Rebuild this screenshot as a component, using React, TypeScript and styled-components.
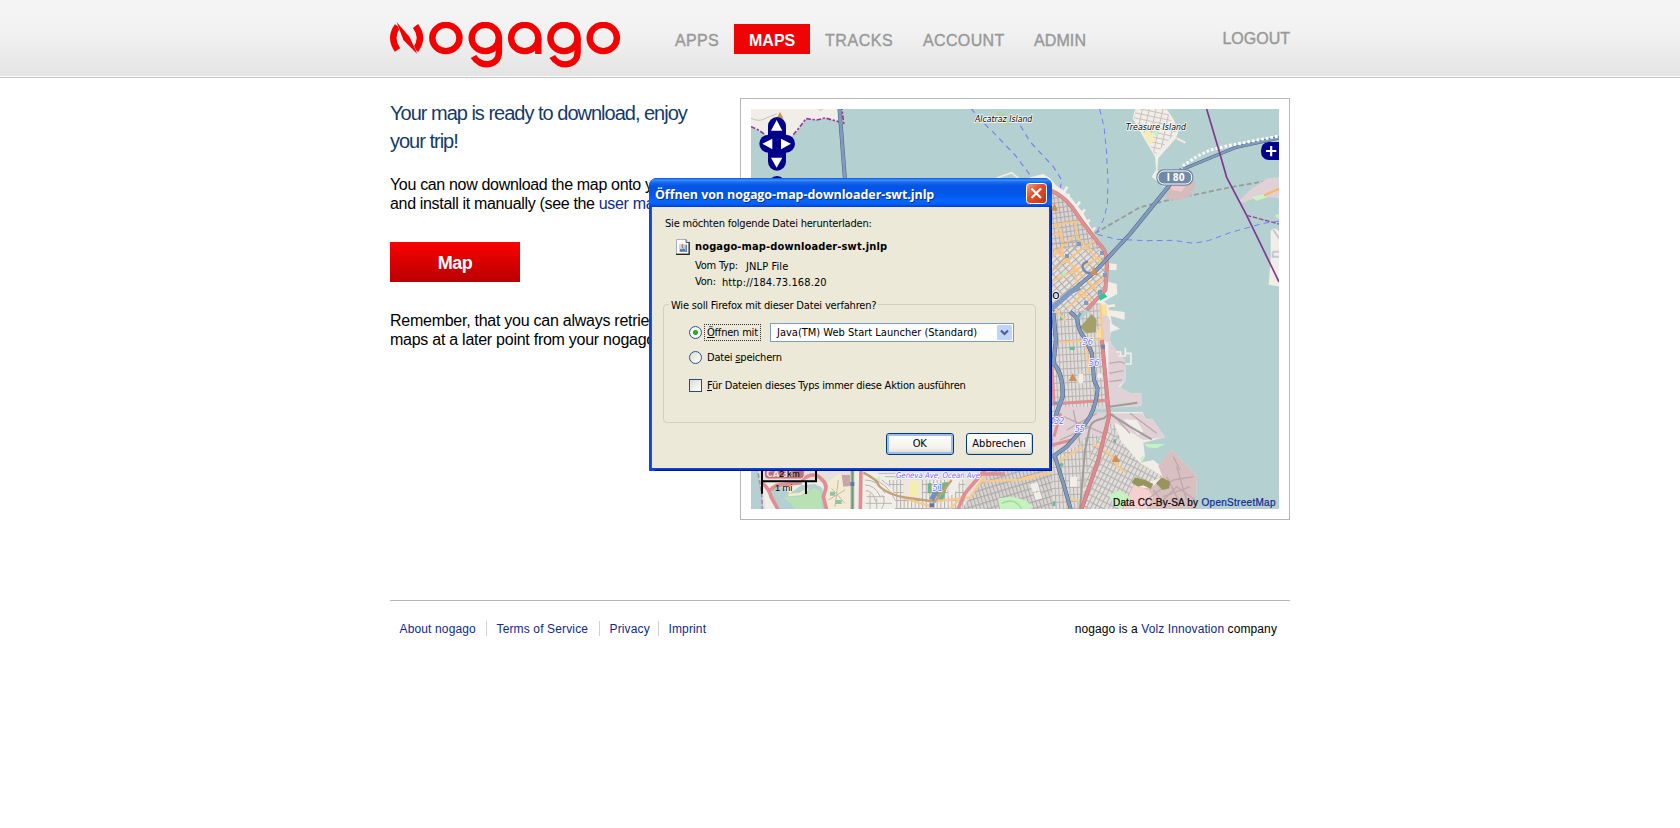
import React from "react";
import styled, { createGlobalStyle } from "styled-components";

const GlobalStyle = createGlobalStyle`
  body {
    margin: 0;
    background: #fff;
    color: #000;
    font-family: "Liberation Sans", Arial, sans-serif;
  }
  * { box-sizing: border-box; }
  h1, p { margin: 0; font-weight: normal; }
  a { color: #0c2a92; text-decoration: none; }
`;

/* ---------- page ---------- */

const Header = styled.header`
  height: 78px;
  background: linear-gradient(#f4f4f4, #f2f2f2 40%, #e4e4e4) 0 0 / 100% 76px no-repeat;
  border-bottom: 1px solid #c4c4c4;
`;

const Container = styled.div`
  width: 900px;
  margin: 0 auto;
`;

const HeaderRow = styled(Container)`
  display: flex;
  align-items: flex-start;
  padding-top: 22px;
`;

const LogoSvg = styled.svg`
  display: block;
  width: 231px;
  height: 46px;
  margin-right: 39px;
`;

const Nav = styled.nav`
  display: flex;
  margin-top: 2px;
`;

const NavItem = styled.a<{ $width: number; $spacing: number; $active?: boolean }>`
  width: ${(p) => p.$width}px;
  height: 30px;
  padding-left: 15px;
  font-size: 16px;
  line-height: 33px;
  white-space: nowrap;
  letter-spacing: ${(p) => p.$spacing}px;
  color: ${(p) => (p.$active ? "#fff" : "#999")};
  font-weight: ${(p) => (p.$active ? "bold" : "normal")};
  background: ${(p) => (p.$active ? "#ee0404" : "transparent")};
  -webkit-text-stroke: ${(p) => (p.$active ? "0" : "0.4px #999")};
`;

const Logout = styled.a`
  margin-left: auto;
  font-size: 16px;
  line-height: 33px;
  color: #999;
  -webkit-text-stroke: 0.4px #999;
`;

const Main = styled(Container)`
  display: flex;
  justify-content: space-between;
  align-items: flex-start;
  padding-top: 20px;
`;

const Intro = styled.section`
  width: 340px;
  padding-top: 1px;
  white-space: nowrap;
`;

const Title = styled.h1`
  font-size: 20px;
  line-height: 28px;
  letter-spacing: -1px;
  color: #143a6b;
`;

const Paragraph = styled.p<{ $top: number; $spacing: number }>`
  margin-top: ${(p) => p.$top}px;
  font-size: 16px;
  line-height: 19px;
  letter-spacing: ${(p) => p.$spacing}px;
`;

const MapButton = styled.button`
  display: block;
  width: 130px;
  height: 40px;
  margin-top: 29px;
  padding: 2px 0 0;
  border: 0;
  background: linear-gradient(#fb0000, #b80000);
  color: #fff;
  font: bold 18px/38px "Liberation Sans", Arial, sans-serif;
  letter-spacing: -0.5px;
`;

const MapFrame = styled.section`
  width: 550px;
  height: 422px;
  padding: 10px;
  border: 1px solid #b6b6b6;
`;

const MapSvg = styled.svg`
  display: block;
  width: 528px;
  height: 400px;
`;

const Footer = styled(Container).attrs({ as: "footer" })`
  display: flex;
  justify-content: space-between;
  margin-top: 80px;
  padding: 20px 13px 0 0;
  border-top: 1px solid #b6b6b6;
  font-size: 12px;
  line-height: 17px;
`;

const FooterLinks = styled.div`
  display: flex;
  height: 15px;
`;

const FooterLink = styled.a<{ $width: number }>`
  width: ${(p) => p.$width}px;
  padding-left: 9.5px;
  letter-spacing: 0.14px;
  & + & { border-left: 1px solid #d0d0d0; }
`;

const Company = styled.div`
  letter-spacing: 0.1px;
`;

/* ---------- download dialog ---------- */

const Dialog = styled.div`
  position: absolute;
  left: 649px;
  top: 178px;
  width: 403px;
  height: 293px;
  display: flex;
  flex-direction: column;
  border-radius: 8px 8px 0 0;
  background: #0a48dd;
  color: #000;
  font: 11px/14px "DejaVu Sans Condensed", "Noto Sans", sans-serif;
  letter-spacing: -0.2px;
  white-space: nowrap;
`;

const TitleBar = styled.div`
  display: flex;
  justify-content: space-between;
  align-items: center;
  height: 29px;
  padding: 1px 5px 0 6px;
  border-radius: 8px 8px 0 0;
  background: linear-gradient(#0b4fd6 0, #3c94ff 2px, #1a6cf2 4px, #0554e2 8px, #0257ea 17px, #0566ff 23px, #0460f5 26px, #003dcb 29px);
`;

const TitleText = styled.span`
  padding-top: 3px;
  color: #fff;
  font: bold 12.5px/20px "Open Sans", "Noto Sans", sans-serif;
  letter-spacing: -0.08px;
  text-shadow: 1px 1px 0 #0a2f8c;
`;

const CloseButton = styled.svg`
  display: block;
  width: 21px;
  height: 21px;
`;

const Body = styled.div`
  flex: 1;
  margin: 0 3px 3px;
  padding: 10px 13px 0 11px;
  background: #ece9d8;
  box-shadow: 1px 1px 0 #0a48dd, 2px 2px 0 #0634cc, 3px 3px 0 #00138c, -1px 0 0 #0a5cf5;
`;

const Question = styled.div`
  padding-left: 2px;
`;

const FileRow = styled.div`
  display: flex;
  gap: 5px;
  margin: 8px 0 0 13px;
  height: 16px;
`;

const FileName = styled.span`
  padding-top: 1px;
  font-weight: bold;
  letter-spacing: 0.14px;
`;

const Detail = styled.div<{ $label: number; $top: number }>`
  display: grid;
  grid-template-columns: ${(p) => p.$label}px auto;
  height: 14px;
  margin: ${(p) => p.$top}px 0 0 32px;
  span + span {
    padding-top: 1px;
    letter-spacing: 0.1px;
  }
`;

const Group = styled.div`
  height: 119px;
  margin-top: 15px;
  border: 1px solid #d0d0bf;
  border-radius: 4px;
`;

const Legend = styled.div`
  display: table;
  margin: -6px 0 10px 5px;
  padding: 0 2px;
  background: #ece9d8;
  letter-spacing: -0.17px;
`;

const Option = styled.label<{ $height: number; $top?: number }>`
  display: flex;
  align-items: center;
  height: ${(p) => p.$height}px;
  margin: ${(p) => p.$top ?? 0}px 0 0 25px;
`;

const Radio = styled.span<{ $on?: boolean }>`
  width: 13px;
  height: 13px;
  margin-right: 2px;
  border: 1px solid #2a5684;
  border-radius: 50%;
  background: ${(p) =>
    p.$on
      ? "radial-gradient(circle, #2fb52f 0, #23a023 2px, #f5f5f0 3px)"
      : "linear-gradient(135deg, #dcdcd4, #fff)"};
`;

const Checkbox = styled.span`
  width: 13px;
  height: 13px;
  margin-right: 2px;
  border: 1px solid #1c5180;
  background: linear-gradient(135deg, #dcdcd4, #fff);
`;

const OptionText = styled.span<{ $focused?: boolean }>`
  padding: 1px 2px 0;
  border: 1px dotted ${(p) => (p.$focused ? "#333" : "transparent")};
  u { text-underline-offset: 1px; }
`;

const Select = styled.span`
  display: flex;
  justify-content: space-between;
  align-items: center;
  width: 244px;
  height: 19px;
  margin-left: auto;
  margin-right: 21px;
  padding: 0 1px 0 6px;
  border: 1px solid #7f9db9;
  background: #fff;
  letter-spacing: 0;
`;

const SelectLabel = styled.span`
  padding-top: 1px;
`;

const SelectArrow = styled.svg`
  display: block;
  width: 15px;
  height: 15px;
`;

const Actions = styled.div`
  display: flex;
  justify-content: flex-end;
  gap: 12px;
  margin: 10px 3px 0 0;
`;

const DialogButton = styled.button<{ $primary?: boolean }>`
  width: ${(p) => (p.$primary ? 68 : 67)}px;
  height: 22px;
  padding: 0 1px 0 0;
  border: 1px solid #003c74;
  border-radius: 3px;
  background: linear-gradient(#fff, #f3f2ec 70%, #dcd8cc);
  box-shadow: ${(p) => (p.$primary ? "inset 0 0 0 2px #9dbdf0" : "inset -1px -1px 0 #d8d4c6")};
  color: #000;
  font: inherit;
  letter-spacing: ${(p) => (p.$primary ? -0.5 : 0)}px;
`;

/* ---------- drawings ---------- */

const Logo = () => (
  <LogoSvg viewBox="0 0 231 46" fill="none" stroke="#f40000" strokeWidth="6.4">
    <path d="M7.500 4 Q-1 16 7.500 28" />
    <path d="M25.500 4 Q34.500 16 25.500 28" />
    <path d="M6.700 0.300 L19.500 15 L27.300 32 L13.500 18 Z" fill="#f40000" stroke="#ececec" strokeWidth=".8" />
    <path d="M6.700 0.300 L19.500 15 L27.300 32 L13.500 18 Z" fill="#f40000" stroke="none" />
    <ellipse cx="55.900" cy="16" rx="13.600" ry="13.100" />
    <ellipse cx="95.300" cy="16" rx="13.600" ry="13.100" />
    <path d="M108.900 16 V30 C108.900 45 90 46 83.500 34.500" />
    <ellipse cx="134.700" cy="16" rx="13.600" ry="13.100" />
    <path d="M148.300 16 V32" />
    <ellipse cx="174" cy="16" rx="13.600" ry="13.100" />
    <path d="M187.600 16 V30 C187.600 45 168.800 46 162.300 34.500" />
    <ellipse cx="213.300" cy="16" rx="13.600" ry="13.100" />
  </LogoSvg>
);

const CloseIcon = () => (
  <CloseButton viewBox="0 0 21 21">
    <defs>
      <linearGradient id="close" x1="0" y1="0" x2="1" y2="1">
        <stop offset="0" stopColor="#f0a48c" />
        <stop offset=".4" stopColor="#e5532c" />
        <stop offset="1" stopColor="#c4310c" />
      </linearGradient>
    </defs>
    <rect x=".5" y=".5" width="20" height="20" rx="3" fill="url(#close)" stroke="#fff" />
    <path d="M5.500 5.500 L15 15 M15 5.500 L5.500 15" stroke="#fff" strokeWidth="2.200" />
  </CloseButton>
);

const FileIcon = () => (
  <svg width="14" height="16" viewBox="0 0 14 16">
    <path d="M.5 .5 H10 L13 3.500 V15 H.5 Z" fill="#fdfdfd" stroke="#a8b0bc" />
    <path d="M13.200 3 V15.400 H0" fill="none" stroke="#222" strokeWidth="1.200" />
    <path d="M10 .5 V3.500 H13" fill="#ddd" stroke="#333" strokeWidth=".8" />
    <rect x="3" y="5" width="8" height="8" fill="#c8d8ec" />
    <path d="M4 10 H9 V12 H4 Z M9.500 6 H11 V13 H4 V12.200 H9.500" fill="#5580b4" />
    <path d="M7 5.500 Q5 7.500 7.500 9.500" fill="none" stroke="#d8683c" strokeWidth="1.200" />
  </svg>
);

const halo = {
  stroke: "#fff",
  strokeWidth: 5,
  strokeLinejoin: "round" as const,
  paintOrder: "stroke",
  lengthAdjust: "spacingAndGlyphs",
};

const water = "#b5d0d0";
const land = "#f1eee8";
const motorway = "#809bc0";

type RoadProps = { d: string; color: string; casing?: string; width: number };
const Road = ({ d, color, casing, width }: RoadProps) => (
  <g fill="none" strokeLinejoin="round">
    {casing && <path d={d} stroke={casing} strokeWidth={width + 3} />}
    <path d={d} stroke={color} strokeWidth={width} />
  </g>
);

type PatternProps = { id: string; w: number; h: number; angle: number; line?: string; bg?: string };
const StreetPattern = ({ id, w, h, angle, line = "#b5b2b1", bg = "#e2dedb" }: PatternProps) => (
  <pattern id={id} width={w} height={h} patternUnits="userSpaceOnUse" patternTransform={`rotate(${angle})`}>
    <rect width={w} height={h} fill={bg} />
    <path d={`M0 1.500 H${w} M1.500 0 V${h}`} stroke={line} strokeWidth="3.500" />
  </pattern>
);

const NorthBay = () => (
  <g transform="translate(735 90) scale(.33333)">
    <path d="M40 50 H318 L325 98 L300 92 L270 84 L245 90 L215 85 L200 108 L180 132 L150 150 L105 142 L85 130 L48 110 Z" fill={land} />
    <path d="M48 85 Q70 95 85 88 T110 78 L125 72 M248 55 L256 62 L265 56" fill="none" stroke="#c6c0c0" strokeWidth="3" />
    <path d="M48 110 L70 120 L88 132 M175 134 L192 114 L213 86 L245 90 L270 84 L300 92 L326 99 L320 50" fill="none" stroke="#953a96" strokeWidth="5" strokeDasharray="14 5 7 5" />
    <path d="M135 66 L146 86 H124 Z" fill="#d08f55" />
    <Road d="M313 50 L330 270" color={motorway} casing="#506077" width={9} />
    <path d="M708 55 Q735 90 770 122 L840 195 L892 264" fill="none" stroke="#7a7aff" strokeWidth="3.500" strokeDasharray="17 14" />
    <path d="M840 80 L885 155 L955 230 L980 270 L975 300" fill="none" stroke="#7a7aff" strokeWidth="3.500" strokeDasharray="17 14" />
    <path d="M782 66 Q800 60 822 82 L832 102 L815 108 L788 84 Z" fill="#b8cfae" />
    <path d="M785 264 L830 248 L850 264" fill="none" stroke={land} strokeWidth="5" />
    <text x="720" y="97" fontSize="28" fontStyle="italic" textLength="172" {...halo}>Alcatraz Island</text>
  </g>
);

const Downtown = () => (
  <g transform="translate(1030 90) scale(.33333)">
    <path d="M0 262 L40 252 L60 265 L80 288 L100 300 L125 325 L160 370 L190 425 L212 455 L236 500 L236 520 L260 522 V540 H236 L234 575 L260 582 L262 612 L238 625 L215 640 H-20 Z" fill={land} />
    <path d="M60 296 L110 325 L160 390 L205 455 L236 505 L230 600 L165 660 H-20 V296 Z" fill="url(#north)" />
    <path d="M66 490 L125 470 L215 480 L236 505 L230 600 L165 660 H66 Z" fill="url(#soma)" />
    <g stroke={land} strokeWidth="8">
      <path d="M95 318 L112 290 M105 335 L118 312 M135 355 L150 335 M150 375 L165 358 M162 400 L180 390 M180 428 L196 412 M232 530 H258 M232 598 L258 596 M232 650 L255 646" />
    </g>
    <g stroke="#f6c583" strokeWidth="6" fill="none">
      <path d="M66 405 L160 392 M66 435 L95 428 L100 470 M66 500 L130 440 M75 400 L95 430 L98 500 L200 600 M66 540 L190 455 M66 575 L215 500 M90 490 L160 560 M135 400 L140 440 L225 530 M110 655 L225 560 M66 470 L130 530 L150 625 M140 590 L190 640" />
    </g>
    <path d="M66 462 L150 455 L66 545" fill="none" stroke="#aaa" strokeWidth="3" />
    <Road d="M60 300 Q100 318 125 350 L160 400 L215 470 Q232 490 231 530 L226 600 L170 660" color="#dd9295" casing="#c97a7e" width={9} />
    <path d="M195 430 L330 352 L400 334 L600 292 L690 276 L747 273" fill="none" stroke="#9b9b9b" strokeWidth="5.500" strokeDasharray="15 8" />
    <g fill={motorway}>
      <path d="M141 456 h12 v12 h-12z M105 492 h12 v12 h-12z M210 483 h12 v12 h-12z M219 549 h12 v12 h-12z M204 600 h12 v12 h-12z M162 633 h12 v12 h-12z" />
    </g>
    <path d="M205 618 L222 608 L232 620 L210 632 Z" fill="#30c898" />
    <path d="M100 543 l8 6 l-6 10 l-8 -8z" fill="#b5f0c0" />
    <path d="M73 340 L84 362 H62 Z" fill="#d08f55" />

    <path d="M315 57 H410 L432 90 L445 125 L438 145 L385 205 L382 240 L405 262 L440 275 L400 290 L365 260 L378 240 L375 200 L345 150 L308 85 Z" fill={land} />
    <path d="M318 57 H408 L440 125 L375 195 L348 140 L312 85 Z" fill="url(#treasure)" />
    <path d="M340 130 l18 -10 l18 30 l-18 14z" fill="#f3edb8" />
    <path d="M372 120 l14 2 l-4 16 l-12 -4z" fill="#c4f3c0" />
    <path d="M440 145 L466 158" stroke={land} strokeWidth="6" />
    <path d="M405 290 L490 268 Q505 280 480 320 L440 332 L405 325 L415 300 Z" fill="#d5bcbc" />
    <path d="M420 285 L465 290 L455 305 L425 300 Z" fill="#f0c8c8" />

    <path d="M628 332 L660 300 L712 265 L750 262 V325 L690 318 L640 338 Z" fill="#dfd1d6" />
    <path d="M664 322 L700 312 L712 322 L680 332 Z M735 376 L750 372 V386 L740 384 Z" fill="#cdf0c4" />
    <path d="M702 316 L725 306 L750 296" fill="none" stroke="#f6b96c" strokeWidth="7" />
    <path d="M722 422 L735 415 L750 425 V590 L716 584 L722 510 Z" fill={land} />
    <path d="M730 420 L750 448 M728 485 V500 H750 M728 485 H750" fill="none" stroke="#c5c5d5" strokeWidth="6" />

    <g fill="none" stroke="#7a7aff" strokeWidth="3" strokeDasharray="17 13">
      <path d="M209 57 L222 110 L229 180 L234 270 L232 345 L220 390 L197 432 L260 448 L350 452 L430 451 L490 460 L535 452 L600 428 L700 400 L747 394" />
    </g>
    <Road d="M460 237 L560 196 L620 171 L747 144" color={motorway} casing="#506077" width={7} />
    <path d="M458 228 L500 200 L540 180 L600 166 L747 138" fill="none" stroke="#fff" strokeWidth="9" strokeDasharray="8 6" />
    <Road d="M455 238 L415 290 L300 432 L195 545 L130 600 L66 655" color={motorway} casing="#506077" width={9} />
    <path d="M195 545 Q165 558 157 530 Q158 518 174 514" fill="none" stroke="#6f8bb5" strokeWidth="7" />
    <path d="M66 655 L125 603 L150 592" fill="none" stroke={motorway} strokeWidth="16" />
    <path d="M192 530 L204 555 H180 Z" fill="#d08f55" />
    <path d="M530 57 L568 185 L590 262 L650 376 L747 576" fill="none" stroke="#7d3a8c" strokeWidth="5" />
    <path d="M650 376 L747 402" fill="none" stroke="#8c4a98" strokeWidth="4" strokeDasharray="14 5" />

    <rect x="379" y="238" width="111" height="49" rx="22" fill="#7189a5" />
    <rect x="384" y="243" width="101" height="39" rx="18" fill="none" stroke="#fff" strokeWidth="3" />
    <text x="410" y="274" fontSize="29" fontWeight="bold" fill="#fff" textLength="54" lengthAdjust="spacingAndGlyphs">I 80</text>
    <text x="287" y="119" fontSize="28" fontStyle="italic" textLength="181" {...halo}>Treasure Island</text>
    <text x="66" y="628" fontSize="38" {...halo}>o</text>
  </g>
);

const SouthBay = () => (
  <g transform="translate(1030 300) scale(.33333)">
    <path d="M-20 0 H215 L235 15 L236 30 L284 36 V60 L242 48 L246 72 L270 86 L242 96 L240 120 L250 150 L285 180 L288 240 L270 262 L300 280 H334 V318 L250 322 L190 326 L195 336 H338 L346 356 L368 358 L405 412 L340 428 L345 470 L330 488 L370 480 L388 495 L424 449 L501 528 L496 640 H-20 Z" fill={land} />
    <path d="M66 0 H210 L236 330 L320 540 L300 627 H-20 V510 H66 Z" fill="url(#mission)" />
    <path d="M235 120 L285 180 L288 240 L265 258 L300 280 H334 V318 L235 324 Z M215 20 L240 60 L240 130 L216 120 Z" fill="#dfd1d6" />
    <path d="M90 320 H235 L230 420 L180 400 L140 440 L80 460 L66 400 Z M236 340 H338 L346 358 L368 358 L405 412 L340 420 L260 370 L236 372 Z" fill="#dfd1d6" />
    <path d="M280 358 L320 360 L340 395 L325 405 Z" fill={land} />
    <path d="M190 428 L240 385 L330 490 L400 530 L320 560 L290 627 H150 Z" fill="url(#bayview)" />
    <path d="M424 449 L501 528 L496 640 H270 L310 560 L360 565 L400 535 L385 497 Z" fill="#d8bfc0" />
    <path d="M310 556 L355 570 L370 590 L350 627 H280 Z" fill="#f7cfcf" />
    <g fill="none" stroke="#c0a8ac" strokeWidth="4">
      <path d="M350 600 L430 540 L490 530 M380 620 L440 560 L495 600 M410 530 L450 610 M440 500 L470 600 M400 590 L480 560 M370 570 L400 610 M430 470 L450 510" />
      <path d="M238 190 L270 185 L285 190 M238 220 L280 212 M238 245 L275 240 M100 350 L220 400 M110 390 L200 340 M90 420 L180 380 M130 330 L150 430 M245 340 L300 400 M300 340 L380 400" />
    </g>
    <path d="M150 82 L185 42 L200 60 L198 95 L170 100 Z" fill="#a3a169" />
    <path d="M140 62 L185 22" stroke={water} strokeWidth="10" />
    <path d="M215 15 L230 12 L232 45 L215 48 Z M200 90 L216 90 V115 L200 112 Z" fill="#f8dfa0" />
    <path d="M305 548 L315 532 L345 540 L370 552 L362 567 L340 556 L325 560 Z M378 550 L395 532 L420 545 L418 565 L398 570 Z" fill="#97955c" />
    <path d="M328 415 L345 432 L405 432 L380 445 L352 442 Z M330 475 L342 465 L338 490 Z M235 585 L270 570 L300 592 L275 627 L255 620 Z" fill="#c4f3c0" />
    <path d="M190 332 H232" stroke={water} strokeWidth="10" />
    <path d="M258 156 H272 V166 M265 168 H286 V143 M288 160 H303 V192 H287" fill="none" stroke={land} strokeWidth="5" />
    <path d="M235 20 H250" stroke="#b89a9a" strokeWidth="6" />
    <path d="M90 40 h8 v20 h-8z M120 140 h14 v10 h-14z M250 418 h8 v10 h-8z M66 604 h10 v14 h-10z M88 490 h12 v9 h-12z" fill="#6fb89a" />
    <path d="M145 222 h14 v28 h-14z M202 220 h14 v14 h-14z M120 530 h22 v30 h-22z M10 548 h20 v20 h-20z M10 580 h25 v18 h-25z" fill={land} />
    <g fill="none" stroke="#f8c98c" strokeWidth="7">
      <path d="M88 128 L215 118 M170 128 L176 222 M188 430 L240 462 L262 498 L288 518 M157 443 L110 468 L78 490 L105 580 L118 627 M105 596 L160 604 M210 0 L218 120 M75 38 L115 5 M-20 540 L66 503 M78 30 L110 65" />
    </g>
    <path d="M237 340 Q270 360 300 380 L365 418 M237 340 L222 355 Q185 362 180 380 L165 450 L150 627 M237 320 L322 308" fill="none" stroke="#a09c9c" strokeWidth="6" />
    <Road d="M216 120 L228 250 L237 350 L205 480 L155 627" color="#dd8a8e" casing="#c47478" width={9} />
    <path d="M66 312 L235 300 M66 195 L72 310 M66 435 L125 420 M72 410 L92 340" fill="none" stroke="#e08f93" strokeWidth="9" />
    <Road d="M66 30 Q90 10 120 -10 M70 40 L78 120 L70 190 Q100 220 98 290 L85 325 L70 370" color={motorway} casing="#506077" width={10} />
    <Road d="M120 35 L142 55 Q142 90 165 115 L186 160 L192 240 L203 265 Q200 310 180 350 L150 395 L110 440 L66 472 M75 470 L100 550 L122 627" color={motorway} casing="#506077" width={9} />
    <path d="M142 55 L152 38 M70 310 L98 308" stroke={motorway} strokeWidth="9" />
    <path d="M162 2 h12 v12 h-12z M213 134 h12 v12 h-12z" fill="#7084b0" />
    <path d="M128 220 L141 243 H116 Z M257 463 L270 486 H245 Z" fill="#d08f55" />
    <g fontSize="28" fontStyle="italic" fill="#6c6cff">
      <text x="157" y="134" textLength="32" {...halo}>56</text>
      <text x="177" y="197" textLength="31" {...halo}>56</text>
      <text x="58" y="371" textLength="45" {...halo}>432</text>
      <text x="134" y="395" textLength="31" {...halo}>55</text>
    </g>
  </g>
);

const SouthWest = () => (
  <g transform="translate(735 460) scale(.33333)">
    <path d="M40 20 H952 V147 H40 Z" fill="#e6e1dd" />
    <path d="M40 20 H66 L78 90 L86 150 H40 Z" fill={water} />
    <path d="M66 20 L80 100 L82 150" fill="none" stroke="#a58bb5" strokeWidth="5" strokeDasharray="14 6" />
    <path d="M86 66 H265 V147 H90 Z" fill={land} />
    <path d="M108 78 L140 82 L165 100 L200 75 L240 72 L262 84 L268 147 H135 L112 110 Z" fill={water} />
    <path d="M150 110 L190 112 L240 84 L258 96 L262 147 H180 Q165 125 150 118 Z" fill="#b8e2b4" />
    <path d="M160 105 L195 102 L220 88" stroke="#f4eec0" strokeWidth="7" fill="none" />
    <path d="M275 70 L310 40 L345 60 V147 H278 Z" fill="#f2ead2" />
    <path d="M320 45 H345 V78 L325 80 Z" fill="#c9a5a5" />
    <path d="M285 95 h15 v12 h-15z M300 120 h20 v12 h-20z" fill="#8fc4a0" />
    <path d="M290 85 L330 130 M280 120 L330 90 M310 60 L300 140" stroke="#c8b8a8" strokeWidth="3" />
    <path d="M360 20 H480 V147 H360 Z" fill={land} />
    <path d="M352 20 V147" stroke="#88b888" strokeWidth="10" />
    <path d="M352 20 V147" stroke="#6f9070" strokeWidth="3" />
    <g fill="none" stroke="#bab6b4" strokeWidth="3">
      <path d="M390 60 Q430 60 450 100 M390 75 Q420 75 436 110 M392 92 Q415 92 422 125 M395 110 H450 M392 130 H470 M400 50 Q460 70 480 120 M440 105 Q455 120 440 147 M405 100 V147 M425 115 V147 M430 40 H480 M450 50 H500 M440 60 L480 90" />
    </g>
    <path d="M455 60 H690 V147 H480 V105 Z" fill="url(#ingleside)" />
    <path d="M680 147 L760 33 H952 V147 Z" fill="url(#excelsior)" />
    <path d="M505 60 H560 V115 H505 Z" fill="#f0e6e0" />
    <path d="M523 64 H550 V108 H523 Z" fill="#f5efad" />
    <path d="M578 70 h12 v30 h-12z M610 70 L640 66 L625 120 L605 118 Z" fill="#70b487" />
    <path d="M640 50 L680 50 L660 100 L640 110 Z" fill={land} />
    <path d="M420 60 l12 -12 l4 14z M790 115 L830 110 L870 120 L895 140 L885 147 H795 Z" fill="#c4f3c0" />
    <path d="M800 130 Q840 110 860 147" fill="none" stroke="#a5d5a0" strokeWidth="4" />
    <path d="M885 73 l22 -6 l8 24 l-22 6z M895 100 l20 -5 l7 20 l-20 5z" fill={land} />
    <g fill="none" stroke="#f8c98c" strokeWidth="7">
      <path d="M500 112 L590 140 M600 125 L705 112 L720 90 L760 33 M735 64 L850 60 L905 45 L952 38 M645 147 L690 100 M850 60 L900 52" />
    </g>
    <path d="M385 38 Q430 60 432 78 Q460 105 510 112 L600 125 L650 60" fill="none" stroke="#c2a176" strokeWidth="7" />
    <path d="M590 120 L605 90" stroke="#7a90bb" strokeWidth="16" />
    <path d="M584 130 h14 v12 h-14z M346 66 h12 v12 h-12z" fill="#5f76ac" />
    <g fill="none" stroke="#dd8f93" strokeWidth="11">
      <path d="M80 66 Q105 90 108 110 L130 150 M200 60 Q240 30 262 60 Q280 75 268 100 L265 110 L275 150 M105 90 L125 76 L200 68 M378 20 L376 150 M668 150 L690 100 L750 30 M735 42 H810" />
    </g>
    <rect x="88" y="15" width="120" height="42" rx="12" fill="#b9737b" stroke="#f5dfe0" strokeWidth="3" />
    <text x="94" y="51" fontSize="26" fontWeight="bold" fill="#f3dcdc">CA 35</text>
    <g fontSize="24" fontStyle="italic" fill="#6c6cff">
      <text x="483" y="55" textLength="252" {...halo}>Geneva Ave, Ocean Ave</text>
      <text x="593" y="92" fontSize="28" textLength="30" {...halo}>51</text>
    </g>
    <path d="M81 20 V101 M78 64 H246 M243 20 V66 M213 64 V102" fill="none" stroke="#000" strokeWidth="6" />
    <g fontFamily="Liberation Sans, sans-serif" fontSize="28">
      <text x="132" y="52" textLength="62">2 km</text>
      <text x="120" y="93" textLength="52">1 mi</text>
    </g>
  </g>
);

const MapControls = () => (
  <>
    <g transform="translate(735 90) scale(.33333)">
      <g fill="#00008b">
        <rect x="99" y="81" width="54" height="161" rx="27" />
        <rect x="73" y="134" width="107" height="54" rx="27" />
        <circle cx="126" cy="285" r="27" />
      </g>
      <path d="M125 90 L142 122 H108 Z M108 203 H142 L125 233 Z M82 161 L112 146 V178 Z M168 161 L138 146 V178 Z" fill="#fff" />
    </g>
    <g transform="translate(1030 90) scale(.33333)">
      <path d="M750 156 H716 Q693 158 693 183 Q693 208 716 210 H750 Z" fill="#00008b" />
      <path d="M708 183 H739 M723.500 168 V199" stroke="#fff" strokeWidth="6.500" />
    </g>
    <g fontFamily="Liberation Sans, sans-serif" fontSize="10" strokeWidth=".2">
      <text x="1113" y="506" textLength="85" stroke="#000">Data CC-By-SA by</text>
      <text x="1201.500" y="506" fill="#0c2a92" stroke="#0c2a92" textLength="74">OpenStreetMap</text>
    </g>
  </>
);

const CityMap = () => (
  <MapSvg viewBox="751 109 528 400" fontFamily="DejaVu Sans, sans-serif">
    <defs>
      <StreetPattern id="north" w={12} h={15} angle={-8} line="#b0acac" bg="#dcd5d2" />
      <StreetPattern id="soma" w={20} h={13} angle={-42} line="#b2aead" bg="#e6e1dc" />
      <StreetPattern id="treasure" w={20} h={15} angle={12} line="#cbc2c2" bg="#f1eee8" />
      <StreetPattern id="mission" w={11} h={21} angle={-3} />
      <StreetPattern id="bayview" w={12} h={19} angle={27} />
      <StreetPattern id="ingleside" w={11} h={24} angle={0} bg="#f1eee8" />
      <StreetPattern id="excelsior" w={11} h={20} angle={-17} line="#aeaaa9" bg="#d9d5d3" />
    </defs>
    <rect x="751" y="109" width="528" height="400" fill={water} />
    <NorthBay />
    <SouthBay />
    <Downtown />
    <SouthWest />
    <MapControls />
  </MapSvg>
);

const DownloadDialog = () => (
  <Dialog role="dialog">
    <TitleBar>
      <TitleText>Öffnen von nogago-map-downloader-swt.jnlp</TitleText>
      <CloseIcon />
    </TitleBar>
    <Body>
      <Question>Sie möchten folgende Datei herunterladen:</Question>
      <FileRow>
        <FileIcon />
        <FileName>nogago-map-downloader-swt.jnlp</FileName>
      </FileRow>
      <Detail $label={51} $top={4}>
        <span>Vom Typ:</span>
        <span>JNLP File</span>
      </Detail>
      <Detail $label={27} $top={2}>
        <span>Von:</span>
        <span>http://184.73.168.20</span>
      </Detail>
      <Group>
        <Legend>Wie soll Firefox mit dieser Datei verfahren?</Legend>
        <Option $height={19}>
          <Radio $on />
          <OptionText $focused><u>Ö</u>ffnen mit</OptionText>
          <Select>
            <SelectLabel>Java(TM) Web Start Launcher (Standard)</SelectLabel>
            <SelectArrow viewBox="0 0 15 15">
              <rect width="15" height="15" rx="1.500" fill="#c1d3fb" />
              <path d="M4 5.500 L7.500 9 L11 5.500" fill="none" stroke="#4d6185" strokeWidth="2.200" />
            </SelectArrow>
          </Select>
        </Option>
        <Option $height={14} $top={8}>
          <Radio />
          <OptionText>Datei <u>s</u>peichern</OptionText>
        </Option>
        <Option $height={14} $top={14}>
          <Checkbox />
          <OptionText><u>F</u>ür Dateien dieses Typs immer diese Aktion ausführen</OptionText>
        </Option>
      </Group>
      <Actions>
        <DialogButton $primary>OK</DialogButton>
        <DialogButton>Abbrechen</DialogButton>
      </Actions>
    </Body>
  </Dialog>
);

export default function App() {
  return (
    <>
      <GlobalStyle />
      <Header>
        <HeaderRow>
          <Logo />
          <Nav>
            <NavItem $width={74} $spacing={0.3}>APPS</NavItem>
            <NavItem $width={76} $spacing={0} $active>MAPS</NavItem>
            <NavItem $width={98} $spacing={0.55}>TRACKS</NavItem>
            <NavItem $width={111} $spacing={0.35}>ACCOUNT</NavItem>
            <NavItem $width={82} $spacing={0.1}>ADMIN</NavItem>
          </Nav>
          <Logout>LOGOUT</Logout>
        </HeaderRow>
      </Header>
      <Main as="main">
        <Intro>
          <Title>Your map is ready to download, enjoy<br />your trip!</Title>
          <Paragraph $top={20} $spacing={-0.33}>
            You can now download the map onto your PC<br />
            and install it manually (see the <a>user manual</a>).
          </Paragraph>
          <MapButton>Map</MapButton>
          <Paragraph $top={29} $spacing={-0.26}>
            Remember, that you can always retrieve your<br />
            maps at a later point from your nogago page.
          </Paragraph>
        </Intro>
        <MapFrame>
          <CityMap />
        </MapFrame>
      </Main>
      <Footer>
        <FooterLinks>
          <FooterLink $width={96}>About nogago</FooterLink>
          <FooterLink $width={113}>Terms of Service</FooterLink>
          <FooterLink $width={59}>Privacy</FooterLink>
          <FooterLink $width={60}>Imprint</FooterLink>
        </FooterLinks>
        <Company>nogago is a <a>Volz Innovation</a> company</Company>
      </Footer>
      <DownloadDialog />
    </>
  );
}
